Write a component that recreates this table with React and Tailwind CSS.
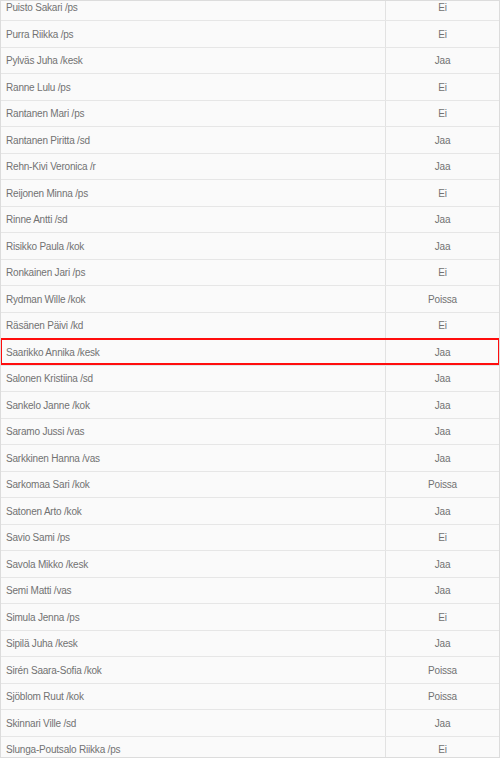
const rows = [
  ["Puisto Sakari /ps", "Ei"],
  ["Purra Riikka /ps", "Ei"],
  ["Pylväs Juha /kesk", "Jaa"],
  ["Ranne Lulu /ps", "Ei"],
  ["Rantanen Mari /ps", "Ei"],
  ["Rantanen Piritta /sd", "Jaa"],
  ["Rehn-Kivi Veronica /r", "Jaa"],
  ["Reijonen Minna /ps", "Ei"],
  ["Rinne Antti /sd", "Jaa"],
  ["Risikko Paula /kok", "Jaa"],
  ["Ronkainen Jari /ps", "Ei"],
  ["Rydman Wille /kok", "Poissa"],
  ["Räsänen Päivi /kd", "Ei"],
  ["Saarikko Annika /kesk", "Jaa"],
  ["Salonen Kristiina /sd", "Jaa"],
  ["Sankelo Janne /kok", "Jaa"],
  ["Saramo Jussi /vas", "Jaa"],
  ["Sarkkinen Hanna /vas", "Jaa"],
  ["Sarkomaa Sari /kok", "Poissa"],
  ["Satonen Arto /kok", "Jaa"],
  ["Savio Sami /ps", "Ei"],
  ["Savola Mikko /kesk", "Jaa"],
  ["Semi Matti /vas", "Jaa"],
  ["Simula Jenna /ps", "Ei"],
  ["Sipilä Juha /kesk", "Jaa"],
  ["Sirén Saara-Sofia /kok", "Poissa"],
  ["Sjöblom Ruut /kok", "Poissa"],
  ["Skinnari Ville /sd", "Jaa"],
  ["Slunga-Poutsalo Riikka /ps", "Ei"],
];

export default function App() {
  return (
    <div
      className="w-[500px] h-[758px] overflow-hidden border border-[#dcdcdc] bg-[#fafafa] text-[10px] tracking-[-0.2px] text-[#727272]"
      style={{ fontFamily: "'Liberation Sans', Arial, sans-serif" }}
    >
      <div className="-mt-[6.5px]">
        {rows.map(([name, vote], i) => {
          const hl = name.startsWith("Saarikko");
          return (
            <div key={i} className="relative grid grid-cols-[385px_1fr] h-[26.5px] border-b border-[#e6e6e6]">
              <div className="flex items-center pl-[5px] pt-px border-r border-[#e2e2e2]">{name}</div>
              <div className="flex items-center justify-center pt-px">{vote}</div>
              {hl && (
                <div className="absolute -left-px -right-px -top-px bottom-0 border-2 border-[#ff0d0d] pointer-events-none" />
              )}
            </div>
          );
        })}
      </div>
    </div>
  );
}
